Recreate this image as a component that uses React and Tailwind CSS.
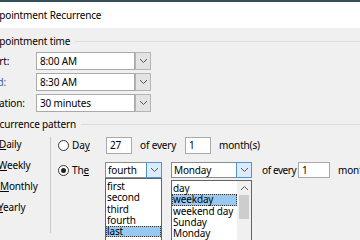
import React from 'react';

function Chevron({ up }) {
  return (
    <svg width="9" height="6" viewBox="0 0 9 6">
      <path d={up ? 'M1 5l3.5-3.5L8 5' : 'M1 1l3.5 3.5L8 1'} fill="none" stroke="#555" strokeWidth="1" />
    </svg>
  );
}

function Radio({ checked }) {
  return (
    <span className="w-[11px] h-[11px] rounded-full border border-[#333] bg-white flex items-center justify-center">
      {checked && <span className="w-[5px] h-[5px] rounded-full bg-[#222]" />}
    </span>
  );
}

function TimeRow({ label, shift, value, blue }) {
  return (
    <div className="flex items-center h-[18px]">
      <div className="w-[36px] shrink-0 overflow-hidden">
        <span className={`block whitespace-nowrap ${shift} ${blue ? 'text-[#3d62a8]' : ''}`}>{label}</span>
      </div>
      <div className="w-[99px] shrink-0 h-full border border-[#a9a9a9] bg-white pl-[3px] flex items-center">{value}</div>
      <div className="w-[16px] shrink-0 h-full border border-[#b4b4b4] bg-[#e3e3e3] flex items-center justify-center">
        <Chevron />
      </div>
    </div>
  );
}

function Combo({ width, value }) {
  return (
    <div className={`flex shrink-0 h-[16px] ${width}`}>
      <div className="flex-1 border border-[#8c8c8c] border-r-0 bg-white pl-[2px] flex items-center">{value}</div>
      <div className="w-[16px] border border-[#4f94d4] bg-[#dcecfc] flex items-center justify-center">
        <Chevron />
      </div>
    </div>
  );
}

function Header({ label, shift }) {
  return (
    <div className="flex items-center h-[14px] overflow-hidden">
      <span className={`whitespace-nowrap ${shift}`}>{label}</span>
      <div className="flex-1 h-px bg-[#dcdcdc] ml-[5px]" />
    </div>
  );
}

export default function App() {
  const nth = ['first', 'second', 'third', 'fourth', 'last'];
  const days = ['day', 'weekday', 'weekend day', 'Sunday', 'Monday'];

  return (
    <div className="relative w-[360px] h-[240px] overflow-hidden bg-[#f0f0f0] text-[10px] tracking-[-0.15px] text-black font-['Noto_Sans',sans-serif]">
      <div className="h-[2px] bg-[#35505a]" />
      <div className="h-[26px] bg-white flex items-center overflow-hidden">
        <span className="whitespace-nowrap -ml-[13px]">Appointment Recurrence</span>
      </div>

      <div className="pt-[6px]">
        <Header label="Appointment time" shift="-ml-[13px]" />
        <div className="mt-[4px] flex flex-col gap-[3px]">
          <TimeRow label="Start:" shift="-ml-[15px]" value="8:00 AM" />
          <TimeRow label="End:" shift="-ml-[14px]" value="8:30 AM" blue />
          <TimeRow label="Duration:" shift="-ml-[18px]" value="30 minutes" />
        </div>

        <div className="mt-[5px]">
          <Header label="Recurrence pattern" shift="-ml-[12px]" />
        </div>

        <div className="flex">
          <div className="w-[51px] shrink-0 border-r border-[#c8c8c8] mt-[6px] h-[96px] flex flex-col gap-[8px] pt-[1px] overflow-hidden">
            <span className="h-[13px] leading-[13px] whitespace-nowrap -ml-[1px]"><u>D</u>aily</span>
            <span className="h-[13px] leading-[13px] whitespace-nowrap -ml-[2px]"><u>W</u>eekly</span>
            <span className="h-[13px] leading-[13px] whitespace-nowrap"><u>M</u>onthly</span>
            <span className="h-[13px] leading-[13px] whitespace-nowrap -ml-[2px]"><u>Y</u>early</span>
          </div>

          <div className="flex-1 min-w-0 flex flex-col pt-[6px] whitespace-nowrap">
            <div className="flex items-center h-[17px]">
              <div className="ml-[7px] shrink-0"><Radio /></div>
              <span className="ml-[3px] w-[34px] shrink-0">Da<u>y</u></span>
              <div className="w-[26px] shrink-0 h-full border border-[#a9a9a9] bg-white pl-[3px] flex items-center">27</div>
              <span className="ml-[8px] w-[45px] shrink-0">of every</span>
              <div className="w-[26px] shrink-0 h-full border border-[#a9a9a9] bg-white pl-[3px] flex items-center">1</div>
              <span className="ml-[8px] shrink-0">month(s)</span>
            </div>

            <div className="flex items-center h-[16px] mt-[8px]">
              <div className="ml-[7px] shrink-0"><Radio checked /></div>
              <span className="ml-[3px] w-[33px] shrink-0">Th<u>e</u></span>
              <Combo width="w-[57px]" value="fourth" />
              <div className="ml-[9px] shrink-0">
                <Combo width="w-[81px]" value="Monday" />
              </div>
              <span className="ml-[10px] w-[36px] shrink-0 tracking-[-0.4px]">of every</span>
              <div className="w-[32px] shrink-0 h-full border border-[#a9a9a9] bg-white pl-[3px] flex items-center">1</div>
              <span className="ml-[8px] shrink-0">month(s)</span>
            </div>
          </div>
        </div>
      </div>

      <div className="absolute left-[105px] top-[178px] w-[57px] h-[70px] border border-[#646464] bg-white pt-[2px]">
        {nth.map((t) => (
          <div
            key={t}
            className={`h-[11.25px] leading-[11.25px] pl-[1px] ${t === 'last' ? 'bg-[#99c9ef] outline outline-1 outline-dotted outline-[#333] -outline-offset-1' : ''}`}
          >
            {t}
          </div>
        ))}
      </div>

      <div className="absolute left-[171px] top-[180px] w-[81px] h-[70px] border border-[#646464] bg-white flex">
        <div className="flex-1 min-w-0 pt-[2px] overflow-hidden">
          {days.map((t) => (
            <div
              key={t}
              className={`h-[11.25px] leading-[11.25px] pl-[1px] whitespace-nowrap ${t === 'weekday' ? 'bg-[#99c9ef] outline outline-1 outline-dotted outline-[#333] -outline-offset-1' : ''}`}
            >
              {t}
            </div>
          ))}
        </div>
        <div className="w-[14px] shrink-0 bg-[#f0f0f0] flex flex-col items-center">
          <div className="h-[14px] flex items-center justify-center"><Chevron up /></div>
          <div className="w-[10px] h-[24px] bg-[#cdcdcd]" />
        </div>
      </div>
    </div>
  );
}
